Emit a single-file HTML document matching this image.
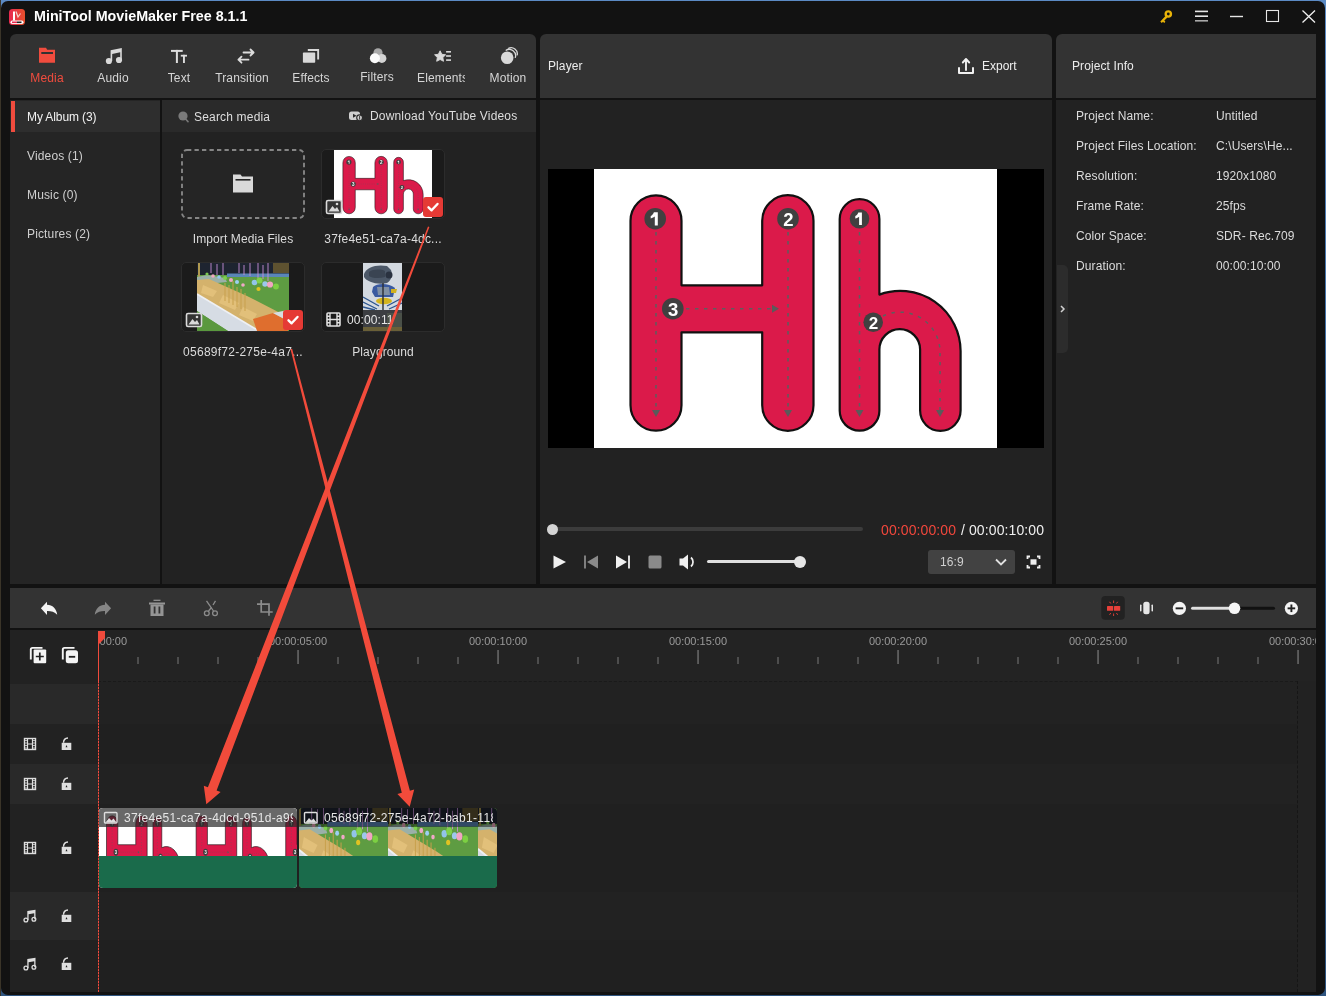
<!DOCTYPE html>
<html><head><meta charset="utf-8">
<style>
*{margin:0;padding:0;box-sizing:border-box}
html,body{width:1326px;height:996px;overflow:hidden}
body{background:linear-gradient(90deg,#3a3428 0,#3a3428 1px,transparent 1px),linear-gradient(#5b8ac4 0,#5b8ac4 40px,#2a5a8c 60%,#2f5580);font-family:"Liberation Sans",sans-serif;position:relative}
.a{position:absolute}
.t{will-change:transform;position:absolute;white-space:nowrap;font-size:12px;letter-spacing:0.15px;color:#e6e6e6;line-height:14px}
#win{position:absolute;left:1px;top:1px;width:1324px;height:994px;background:#121212;border-radius:7px;overflow:hidden}
</style></head><body>
<div id="win"></div>
<div id="root" style="position:absolute;left:0;top:0;width:1326px;height:996px;will-change:transform">

<svg width="0" height="0" style="position:absolute">
<defs>
 <g id="hh">
  <rect x="594" y="169" width="403" height="279" fill="#fff"/>
  <g fill="#db1a4a" stroke="#111" stroke-width="2.2" stroke-linejoin="round">
   <path d="M630.5 220.8 A25.5 25.5 0 0 1 681.5 220.8 L681.5 285.3 L762.2 285.3 L762.2 220.8 A25.65 25.65 0 0 1 813.5 220.8 L813.5 405.2 A25.65 25.65 0 0 1 762.2 405.2 L762.2 332.3 L681.5 332.3 L681.5 405.2 A25.5 25.5 0 0 1 630.5 405.2 Z"/>
   <path d="M839.7 219.05 A19.85 19.85 0 0 1 879.4 219.05 L879.4 294.6 A60.4 60.4 0 0 1 960.6 351 L960.6 410.6 A20.25 20.25 0 0 1 920.1 410.6 L920.1 349.5 A20.35 20.35 0 0 0 879.4 349.5 L879.4 410.85 A19.85 19.85 0 0 1 839.7 410.85 Z"/>
  </g>
  <g stroke="#5e5e5e" stroke-width="1.5" fill="none" stroke-dasharray="3.4 5.6">
   <path d="M656 232 V410"/><path d="M788 232 V410"/><path d="M686 308.7 H772"/>
   <path d="M859.5 232 V410"/><path d="M883 316 A40 40 0 0 1 940 350 V410"/>
  </g>
  <g fill="#5a5a5a">
   <path d="M652 410 L660 410 L656 417z"/><path d="M784 410 L792 410 L788 417z"/>
   <path d="M855.5 410 L863.5 410 L859.5 417z"/><path d="M936 410 L944 410 L940 417z"/>
   <path d="M772 304.7 L772 312.7 L779 308.7z"/>
  </g>
  <g fill="#404040">
   <circle cx="655.2" cy="218.7" r="10.8"/><circle cx="788" cy="218.7" r="10.8"/><circle cx="672.8" cy="308.7" r="10.8"/>
   <circle cx="859.5" cy="218.7" r="9.8"/><circle cx="873.2" cy="322.3" r="9.8"/>
  </g>
  <path d="M653.9 212.2 H657.8 V225.6 H654.8 V216.6 C653.9 217.4 652.4 218.1 650.7 218.6 V215.9 C652.1 215.4 653.3 214 653.9 212.2z" fill="#fff"/><path d="M858.3 212.6 H861.9 V225.1 H859.1 V216.8 C858.3 217.5 856.9 218.2 855.3 218.6 V216.1 C856.6 215.6 857.7 214.3 858.3 212.6z" fill="#fff"/>
  <g fill="#fff" font-family="Liberation Sans" font-weight="bold" font-size="18.5" text-anchor="middle">
   <text x="788.3" y="225.5">2</text><text x="673.2" y="315.5">3</text>
   <text x="873.5" y="328.5" font-size="17">2</text>
  </g>
 </g>
 <g id="food">
  <rect width="92" height="68" fill="#5e9c42"/>
  <rect width="92" height="12" fill="#1e2430"/>
  <rect x="76" y="0" width="16" height="10" fill="#5e5230"/>
  <rect x="30" y="10.5" width="62" height="3.5" fill="#5a86b8"/>
  <path d="M14 0 V10 M20 1 V12 M26 0 V12 M42 0 V10 M47 2 V12 M53 0 V13 M61 0 V15 M66 2 V16 M71 0 V18" stroke="#c890d8" stroke-width="0.9"/>
  <rect x="1" y="0" width="2" height="24" fill="#b09a50"/>
  <path d="M0 14 L10 12 L28 15 L30 19 L0 22z" fill="#9ab0a8"/>
  <path d="M0 17 L12 16 L50 33 L91 54 L91 68 L62 68 L0 33z" fill="#d4b26c"/>
  <path d="M0 31 L62 68 L31 68 L0 48z" fill="#d6dce4"/>
  <path d="M0 31 L62 68" stroke="#eef0f4" stroke-width="1.6"/>
  <path d="M6 22 L20 28 L16 34 L4 30z M26 32 L42 40 L38 47 L22 40z M46 44 L60 51 L56 58 L42 52z" fill="#e2c07a"/>
  <path d="M28 20 V38 M32 22 V40 M36 18 V42 M40 24 V44 M44 26 V46 M48 30 V48" stroke="#c8a04c" stroke-width="1"/>
  <path d="M56 56 L76 50 L91 58 L91 68 L60 68z" fill="#df6e2e"/>
  <path d="M76 50 L91 47 L91 58z" fill="#d8dce2"/>
  <path d="M0 48 L0 68 L31 68z" fill="#5a983e"/>
  <g><circle cx="57.5" cy="19.5" r="2.8" fill="#92c4ea"/><circle cx="62.5" cy="17.5" r="3" fill="#80d04c"/><circle cx="68" cy="21" r="2.7" fill="#9cc8ec"/><circle cx="73" cy="21.5" r="3.1" fill="#f2a4c2"/><circle cx="79" cy="23.5" r="2.9" fill="#7cd042"/><circle cx="61.5" cy="26" r="2.1" fill="#e0c222"/>
  <circle cx="10" cy="11" r="1.6" fill="#7cc850"/><circle cx="16" cy="13" r="1.8" fill="#f0a8c0"/><circle cx="22" cy="14" r="1.8" fill="#90c8f0"/><circle cx="28" cy="15" r="2" fill="#7cd050"/><circle cx="34" cy="17" r="2" fill="#f0a8c8"/><circle cx="40" cy="19" r="2" fill="#9cd0f0"/><circle cx="46" cy="22" r="1.8" fill="#f0a8c8"/></g>
 </g>
 <g id="play">
  <rect width="39" height="68" fill="#d3d9e0"/>
  <path d="M1 11 C3 4 14 1 24 3 L28 7 C30 12 28 18 24 20 C14 22 4 19 1 14z" fill="#4c5868"/>
  <path d="M6 9 C10 6 18 6 22 8 L22 14 C16 16 8 15 6 13z" fill="#3a4452"/>
  <circle cx="26" cy="12" r="3.5" fill="#2a3240"/>
  <path d="M10 24 C14 20 26 20 32 25 L30 34 L12 34 L9 29z" fill="#3a5aa0"/>
  <path d="M14 24 L26 24 L27 32 L15 32z" fill="#8090a4"/>
  <path d="M28 26 L34 26 L33 30 L28 30z" fill="#d0b020"/>
  <ellipse cx="21" cy="38" rx="8" ry="3.2" fill="#d4b41e"/>
  <path d="M20 20 V47" stroke="#2a2e36" stroke-width="1.4"/>
  <path d="M0 34 L16 43 M39 35 L24 43 M0 39 L14 46 M39 40 L26 46 M0 44 L12 47" stroke="#2c5590" stroke-width="1.3"/>
  <rect y="47" width="39" height="21" fill="#3c3e42"/>
  <rect x="24" y="50" width="15" height="14" fill="#4a5048"/>
  <rect y="64" width="39" height="4" fill="#6a6038"/>
 </g>
</defs>
</svg>


<!-- title bar -->
<div class="t" style="left:34px;top:8px;font-size:14.3px;font-weight:bold;color:#fff;line-height:16px;letter-spacing:0">MiniTool MovieMaker Free 8.1.1</div>


<!-- logo -->
<svg class="a" style="left:8px;top:8px" width="18" height="18" viewBox="0 0 18 18">
 <defs><linearGradient id="lg" x1="0" y1="0" x2="1" y2="0"><stop offset="0" stop-color="#e8294f"/><stop offset="1" stop-color="#e8502c"/></linearGradient></defs>
 <rect x="1" y="1" width="16" height="16" rx="3.5" fill="url(#lg)"/>
 <rect x="5" y="3.5" width="2" height="9" fill="#fff"/>
 <path d="M8 3.5 L10 9 L12.5 5.5" stroke="#f4d0c8" stroke-width="1.2" fill="none"/>
 <rect x="2.5" y="12.5" width="13" height="3.5" rx="1.7" fill="#fff"/>
 <rect x="4" y="13.5" width="5" height="1.6" fill="#e8294f"/><rect x="9" y="13.5" width="4.5" height="1.6" fill="#222"/>
</svg>
<!-- window controls -->
<svg class="a" style="left:1150px;top:0" width="176" height="34" viewBox="1150 0 176 34">
 <g fill="#e9b308">
  <circle cx="1168.3" cy="14" r="3.8"/>
  <path d="M1165.5 16 L1160.3 21.5 L1161.8 23 L1163 21.8 L1164.2 23 L1165.4 21.8 L1164.3 20.6 L1167.5 17.5z"/>
 </g>
 <circle cx="1168.3" cy="14" r="1.4" fill="#121212"/>
 <rect x="1195" y="10.6" width="13" height="1.6" fill="#e6e6e6"/>
 <rect x="1195" y="15.4" width="13" height="1.6" fill="#e6e6e6"/>
 <rect x="1195" y="20" width="13" height="1.6" fill="#a8a8a8"/>
 <rect x="1230" y="15.8" width="13" height="1.4" fill="#e6e6e6"/>
 <rect x="1266.5" y="10.5" width="12" height="11" fill="none" stroke="#e6e6e6" stroke-width="1.1"/>
 <path d="M1302.5 10.5 L1315 22.5 M1315 10.5 L1302.5 22.5" stroke="#f0f0f0" stroke-width="1.3"/>
</svg>

<!-- media panel -->
<div class="a" style="left:10px;top:34px;width:526px;height:64px;background:#323232;border-radius:6px 6px 0 0"></div>
<div class="a" style="left:10px;top:100px;width:150px;height:484px;background:#252525"></div>
<div class="a" style="left:11px;top:101px;width:149px;height:31px;background:#2e2e2e"></div>
<div class="a" style="left:11px;top:101px;width:4px;height:31px;background:#f04c3e"></div>
<div class="a" style="left:162px;top:100px;width:374px;height:484px;background:#222"></div>
<div class="a" style="left:162px;top:100px;width:374px;height:32px;background:#2a2a2a"></div>


<!-- toolbar icons -->
<svg class="a" style="left:0;top:0" width="540" height="100" viewBox="0 0 540 100">
 <!-- media folder -->
 <path d="M39 47.8h7l1.2 2H55v13H39z" fill="#f04c3e"/>
 <rect x="41.3" y="52" width="11.7" height="2" fill="#323232"/>
 <!-- audio note -->
 <g fill="#d9d9d9" stroke="none">
  <circle cx="108.9" cy="61" r="3.1"/><circle cx="119" cy="60" r="3.1"/>
  <path d="M110.6 50.2 L121.8 48 L121.8 60 L120.2 60 L120.2 52.3 L112.2 53.9 L112.2 61 L110.6 61z"/>
 </g>
 <!-- text Tt -->
 <g fill="#dcdcdc">
  <rect x="171" y="49.9" width="11.7" height="2"/><rect x="175.9" y="49.9" width="2" height="13.1"/>
  <rect x="180.8" y="54.8" width="6.2" height="1.8"/><rect x="183" y="54.8" width="1.9" height="8.2"/>
 </g>
 <!-- transition arrows -->
 <g stroke="#dcdcdc" stroke-width="1.8" fill="none" stroke-linecap="round" stroke-linejoin="round">
  <path d="M243.5 52.5H253.5M250.5 49.5L253.6 52.5L250.5 55.5"/>
  <path d="M248.5 59.7H238.5M241.5 56.7L238.4 59.7L241.5 62.7"/>
 </g>
 <!-- effects -->
 <g fill="#d9d9d9">
  <rect x="302.9" y="52.6" width="12.3" height="10.1" rx="0.8"/>
  <path d="M307.8 48.9H319.1V59.5H317.2V50.9H307.8z"/>
 </g>
 <!-- filters -->
 <circle cx="378" cy="52.8" r="4.6" fill="#a8a8a8"/>
 <circle cx="381.9" cy="58.4" r="4.5" fill="#d4d4d4"/>
 <circle cx="374.9" cy="58.3" r="5" fill="#fafafa"/>
 <!-- elements -->
 <path d="M440.10 50.80 L441.80 54.25 L445.62 54.81 L442.86 57.50 L443.51 61.29 L440.10 59.50 L436.69 61.29 L437.34 57.50 L434.58 54.81 L438.40 54.25z" fill="#d9d9d9" stroke="#d9d9d9" stroke-width="0.9" stroke-linejoin="round"/>
 <g fill="#d9d9d9"><rect x="446.1" y="51" width="4.9" height="1.6"/><rect x="446.1" y="55.2" width="4.9" height="1.6"/><rect x="446.1" y="59.3" width="4.9" height="1.6"/></g>
 <!-- motion -->
 <g fill="none" stroke="#d9d9d9" stroke-width="1.3"><path d="M505.69 50.54 A6.3 6.3 0 0 1 515.22 57.85"/><path d="M508.15 48.52 A6.1 6.1 0 0 1 517.09 55.38"/></g>
 <circle cx="507.2" cy="57.8" r="6.3" fill="#d9d9d9"/>
</svg>
<div class="t" style="left:27px;top:71px;width:40px;text-align:center;color:#f04c3e">Media</div>
<div class="t" style="left:93px;top:71px;width:40px;text-align:center;color:#d6d6d6">Audio</div>
<div class="t" style="left:159px;top:71px;width:40px;text-align:center;color:#d6d6d6">Text</div>
<div class="t" style="left:212px;top:71px;width:60px;text-align:center;color:#d6d6d6">Transition</div>
<div class="t" style="left:291px;top:71px;width:40px;text-align:center;color:#d6d6d6">Effects</div>
<div class="t" style="left:357px;top:70px;width:40px;text-align:center;color:#d6d6d6">Filters</div>
<div class="a" style="left:417px;top:71px;width:48px;height:16px;overflow:hidden"><div class="t" style="left:0;top:0;color:#d6d6d6">Elements</div></div>
<div class="t" style="left:488px;top:71px;width:40px;text-align:center;color:#d6d6d6">Motion</div>

<!-- sidebar -->
<div class="t" style="left:27px;top:110px;color:#f2f2f2;letter-spacing:-0.1px">My Album (3)</div>
<div class="t" style="left:27px;top:149px;color:#cfcfcf">Videos (1)</div>
<div class="t" style="left:27px;top:188px;color:#cfcfcf">Music (0)</div>
<div class="t" style="left:27px;top:227px;color:#cfcfcf">Pictures (2)</div>


<!-- search row -->
<svg class="a" style="left:176px;top:109px" width="16" height="16" viewBox="0 0 16 16">
 <circle cx="7" cy="7" r="4.6" fill="#7a7a7a"/><path d="M10 10.5 L12 12.6" stroke="#7a7a7a" stroke-width="1.6" stroke-linecap="round"/>
</svg>
<div class="t" style="left:194px;top:110px;color:#dedede;letter-spacing:0.18px">Search media</div>
<svg class="a" style="left:346px;top:108px" width="20" height="16" viewBox="0 0 20 16">
 <rect x="3" y="3.5" width="11" height="8.5" rx="2.5" fill="#cfcfcf"/>
 <path d="M7 5.8 L10.5 7.8 L7 9.8z" fill="#2a2a2a"/>
 <circle cx="13.6" cy="9.8" r="2.9" fill="#cfcfcf" stroke="#2a2a2a" stroke-width="1.1"/>
 <path d="M13.6 8 V11.6" stroke="#2a2a2a" stroke-width="0.9" fill="none"/>
</svg>
<div class="t" style="left:370px;top:109px;color:#dedede;letter-spacing:0.17px">Download YouTube Videos</div>

<!-- import box -->
<svg class="a" style="left:180px;top:148px" width="126" height="72" viewBox="0 0 126 72"><rect x="2" y="2" width="122" height="68" rx="5" fill="#252525" stroke="#858585" stroke-width="1.9" stroke-dasharray="4.3 3.2"/></svg>
<svg class="a" style="left:232px;top:173px" width="22" height="20" viewBox="0 0 22 20">
 <path d="M1 1.5 H8.5 L10 3.5 H21 V19.5 H1z" fill="#d9d9d9"/>
 <rect x="3.5" y="6" width="15" height="1.6" fill="#252525"/>
</svg>
<div class="t" style="left:181px;top:232px;width:124px;text-align:center;color:#dcdcdc;letter-spacing:0.1px">Import Media Files</div>

<!-- Hh card -->
<div class="a" style="left:321px;top:149px;width:124px;height:70px;background:#1b1b1b;border:1px solid #2c2c2c;border-radius:5px"></div>
<svg class="a" style="left:334px;top:150px" width="98" height="68" viewBox="594 169 403 279" preserveAspectRatio="none">
 <use href="#hh"/>
</svg>
<svg class="a" style="left:325px;top:199px" width="18" height="16" viewBox="0 0 18 16">
 <rect x="1.5" y="1.5" width="15" height="13" rx="1.5" fill="#333" stroke="#d9d9d9" stroke-width="1.6"/>
 <path d="M3.5 12.5 L7.5 7 L10 10 L12 8 L14.5 12.5z" fill="#d9d9d9"/><circle cx="12" cy="5" r="1.3" fill="#d9d9d9"/>
</svg>
<div class="a" style="left:423px;top:197px;width:20px;height:20px;background:#e53a35;border-radius:3px"></div>
<svg class="a" style="left:423px;top:197px" width="20" height="20" viewBox="0 0 20 20"><path d="M5.5 10.3 L8.6 13.3 L14.5 7" stroke="#fff" stroke-width="2.4" fill="none" stroke-linecap="round" stroke-linejoin="round"/></svg>
<div class="t" style="left:321px;top:232px;width:124px;text-align:center;color:#dcdcdc;letter-spacing:0.2px">37fe4e51-ca7a-4dc...</div>

<!-- food card -->
<div class="a" style="left:181px;top:262px;width:124px;height:70px;background:#1b1b1b;border:1px solid #2c2c2c;border-radius:5px"></div>
<svg class="a" style="left:197px;top:263px" width="92" height="68" viewBox="0 0 92 68">
 <use href="#food"/>
</svg>
<svg class="a" style="left:185px;top:312px" width="18" height="16" viewBox="0 0 18 16">
 <rect x="1.5" y="1.5" width="15" height="13" rx="1.5" fill="#333" stroke="#d9d9d9" stroke-width="1.6"/>
 <path d="M3.5 12.5 L7.5 7 L10 10 L12 8 L14.5 12.5z" fill="#d9d9d9"/><circle cx="12" cy="5" r="1.3" fill="#d9d9d9"/>
</svg>
<div class="a" style="left:283px;top:310px;width:20px;height:20px;background:#e53a35;border-radius:3px"></div>
<svg class="a" style="left:283px;top:310px" width="20" height="20" viewBox="0 0 20 20"><path d="M5.5 10.3 L8.6 13.3 L14.5 7" stroke="#fff" stroke-width="2.4" fill="none" stroke-linecap="round" stroke-linejoin="round"/></svg>
<div class="t" style="left:181px;top:345px;width:124px;text-align:center;color:#dcdcdc;letter-spacing:0.25px">05689f72-275e-4a7...</div>

<!-- playground card -->
<div class="a" style="left:321px;top:262px;width:124px;height:70px;background:#1b1b1b;border:1px solid #2c2c2c;border-radius:5px"></div>
<svg class="a" style="left:363px;top:263px" width="39" height="68" viewBox="0 0 39 68">
 <use href="#play"/>
</svg>
<svg class="a" style="left:325px;top:311px" width="17" height="17" viewBox="0 0 17 17">
 <rect x="2" y="2" width="13" height="13" rx="1" fill="none" stroke="#e0e0e0" stroke-width="1.6"/>
 <path d="M5 2V15M12 2V15M5 8.5H12M2 5.3H5M2 8.5H5M2 11.7H5M12 5.3H15M12 8.5H15M12 11.7H15" stroke="#e0e0e0" stroke-width="1.4"/>
</svg>
<div class="t" style="left:347px;top:313px;color:#e6e6e6;letter-spacing:0.1px">00:00:11</div>
<div class="t" style="left:321px;top:345px;width:124px;text-align:center;color:#dcdcdc;letter-spacing:0.1px">Playground</div>

<!-- player panel -->
<div class="a" style="left:540px;top:34px;width:512px;height:64px;background:#333;border-radius:6px 6px 0 0"></div>
<div class="a" style="left:540px;top:100px;width:512px;height:484px;background:#222"></div>

<!-- project info -->
<div class="a" style="left:1056px;top:34px;width:260px;height:64px;background:#333;border-radius:6px 0 0 0"></div>
<div class="a" style="left:1056px;top:100px;width:260px;height:484px;background:#222"></div>


<div class="t" style="left:548px;top:59px;color:#ececec;letter-spacing:0.1px">Player</div>
<svg class="a" style="left:956px;top:56px" width="20" height="20" viewBox="956 56 20 20">
 <path d="M959 68 V73 H973 V68" stroke="#f0f0f0" stroke-width="2" fill="none" stroke-linejoin="round" stroke-linecap="round"/>
 <path d="M966 70 V59.5 M962.8 62.5 L966 59 L969.2 62.5" stroke="#f0f0f0" stroke-width="1.9" fill="none" stroke-linecap="round" stroke-linejoin="round"/>
</svg>
<div class="t" style="left:982px;top:59px;color:#f0f0f0;letter-spacing:0">Export</div>
<!-- video -->
<div class="a" style="left:548px;top:169px;width:496px;height:279px;background:#000"></div>
<svg class="a" style="left:594px;top:169px" width="403" height="279" viewBox="594 169 403 279"><use href="#hh"/></svg>
<!-- progress -->
<div class="a" style="left:553px;top:527px;width:310px;height:4px;background:#3c3c3c;border-radius:2px"></div>
<div class="a" style="left:547px;top:524px;width:11px;height:11px;background:#d4d4d4;border-radius:50%"></div>
<div class="t" style="left:881px;top:522px;font-size:14px;line-height:16px;color:#f2473c;letter-spacing:0.1px">00:00:00:00</div>
<div class="t" style="left:961px;top:522px;font-size:14px;line-height:16px;color:#f0f0f0;letter-spacing:0.1px">/ 00:00:10:00</div>
<!-- controls -->
<svg class="a" style="left:540px;top:545px" width="512" height="34" viewBox="540 545 512 34">
 <path d="M553.5 555.5 L566 562 L553.5 568.5z" fill="#f0f0f0"/>
 <path d="M585 555.5 V568.5" stroke="#8a8a8a" stroke-width="1.8"/><path d="M598 555.5 V568.5 L587 562z" fill="#8a8a8a"/>
 <path d="M616 555.5 L627 562 L616 568.5z" fill="#f0f0f0"/><path d="M629 555.5 V568.5" stroke="#f0f0f0" stroke-width="1.8"/>
 <rect x="648.5" y="555.5" width="13" height="13" rx="1.5" fill="#8a8a8a"/>
 <path d="M679.5 558.5 H683 L688 554.5 V569.5 L683 565.5 H679.5z" fill="#f0f0f0"/>
 <path d="M691 557.5 A6 6 0 0 1 691 566.5" stroke="#f0f0f0" stroke-width="1.7" fill="none"/>
 <path d="M1027.5 559 V556.5 H1030 M1037 556.5 H1039.5 V559 M1039.5 565 V567.5 H1037 M1030 567.5 H1027.5 V565" stroke="#f0f0f0" stroke-width="1.8" fill="none"/>
 <rect x="1030.5" y="559.3" width="6" height="5.4" fill="#f0f0f0"/>
</svg>
<div class="a" style="left:707px;top:560px;width:95px;height:3px;background:#e0e0e0;border-radius:2px"></div>
<div class="a" style="left:794px;top:556px;width:12px;height:12px;background:#e6e6e6;border-radius:50%"></div>
<div class="a" style="left:928px;top:550px;width:87px;height:24px;background:#424242;border-radius:3px"></div>
<div class="t" style="left:940px;top:555px;color:#d0d0d0;letter-spacing:0.1px">16:9</div>
<svg class="a" style="left:993px;top:555px" width="16" height="14" viewBox="0 0 16 14"><path d="M3 4.5 L8 9.5 L13 4.5" stroke="#e0e0e0" stroke-width="1.8" fill="none"/></svg>

<!-- project info -->
<div class="t" style="left:1072px;top:59px;color:#ececec;letter-spacing:0.1px">Project Info</div>
<div class="t" style="left:1076px;top:109px;color:#dcdcdc;letter-spacing:0.12px">Project Name:</div>
<div class="t" style="left:1076px;top:139px;color:#dcdcdc;letter-spacing:0.12px">Project Files Location:</div>
<div class="t" style="left:1076px;top:169px;color:#dcdcdc;letter-spacing:0.12px">Resolution:</div>
<div class="t" style="left:1076px;top:199px;color:#dcdcdc;letter-spacing:0.12px">Frame Rate:</div>
<div class="t" style="left:1076px;top:229px;color:#dcdcdc;letter-spacing:0.12px">Color Space:</div>
<div class="t" style="left:1076px;top:259px;color:#dcdcdc;letter-spacing:0.12px">Duration:</div>
<div class="t" style="left:1216px;top:109px;color:#dcdcdc;letter-spacing:0.1px">Untitled</div>
<div class="t" style="left:1216px;top:139px;color:#dcdcdc;letter-spacing:0.1px">C:\Users\He...</div>
<div class="t" style="left:1216px;top:169px;color:#dcdcdc;letter-spacing:0.1px">1920x1080</div>
<div class="t" style="left:1216px;top:199px;color:#dcdcdc;letter-spacing:0.1px">25fps</div>
<div class="t" style="left:1216px;top:229px;color:#dcdcdc;letter-spacing:0.1px">SDR- Rec.709</div>
<div class="t" style="left:1216px;top:259px;color:#dcdcdc;letter-spacing:0.1px">00:00:10:00</div>
<div class="a" style="left:1057px;top:265px;width:11px;height:88px;background:#2c2c2c;border-radius:0 5px 5px 0"></div>
<svg class="a" style="left:1057px;top:302px" width="11" height="14" viewBox="0 0 11 14"><path d="M4 4 L7 7 L4 10" stroke="#d0d0d0" stroke-width="1.5" fill="none"/></svg>

<!-- timeline -->
<div class="a" style="left:10px;top:588px;width:1306px;height:40px;background:#333"></div>
<div class="a" style="left:10px;top:630px;width:1306px;height:362px;background:#222"></div>

<!-- timeline toolbar -->
<svg class="a" style="left:10px;top:588px" width="1306" height="40" viewBox="10 588 1306 40">
 <path d="M40.9 608.2 L47 601.8 L47 604.7 C52.5 604.9 56.6 608.5 57.2 614.8 C54.5 611.8 51 610.9 47 611 L47 615 Z" fill="#f4f4f4"/>
 <path d="M111.1 608.2 L105 601.8 L105 604.7 C99.5 604.9 95.4 608.5 94.8 614.8 C97.5 611.8 101 610.9 105 611 L105 615 Z" fill="#858585"/>
 <g fill="#959595"><rect x="153.5" y="599.7" width="7" height="1.2"/><rect x="149" y="602.5" width="16" height="2"/><path d="M150.5 604.5 H163.5 V616 H150.5z M153.7 606.5 V613.5 H155.5 V606.5z M158.5 606.5 V613.5 H160.3 V606.5z" fill-rule="evenodd"/></g>
 <g stroke="#8c8c8c" stroke-width="1.3" fill="none"><path d="M206.5 600.8 L213.5 611"/><path d="M215.5 600.8 L213 605 M211.5 607.5 L208.5 611"/><circle cx="206.8" cy="613.3" r="2.4"/><circle cx="215" cy="613.3" r="2.4"/></g>
 <g stroke="#8c8c8c" stroke-width="1.7" fill="none"><path d="M261.2 600 V612 H272.7"/><path d="M257 604.2 H269 V615.8"/></g>
 <rect x="1101.3" y="596" width="23.5" height="23.7" rx="4" fill="#222"/>
 <g fill="#e8403a"><rect x="1107" y="606" width="6.2" height="4.8" rx="0.6"/><rect x="1114" y="606" width="6.2" height="4.8" rx="0.6"/></g>
 <g stroke="#e8403a" stroke-width="0.9"><path d="M1113.6 600.5 V603 M1113.6 613.5 V616 M1109.5 601.8 L1110.8 603.5 M1117.7 601.8 L1116.4 603.5 M1109.5 614.8 L1110.8 613 M1117.7 614.8 L1116.4 613"/></g>
 <g fill="#e6e6e6"><rect x="1143.3" y="601.8" width="6.3" height="12.4" rx="2.5"/><rect x="1140" y="604.5" width="1.5" height="7" rx="0.7"/><rect x="1151.5" y="604.5" width="1.5" height="7" rx="0.7"/></g>
 <circle cx="1179.4" cy="608.3" r="6.6" fill="#f4f4f4"/><rect x="1175.6" y="607.4" width="7.6" height="1.9" fill="#222"/>
 <rect x="1191" y="606.8" width="84" height="3" rx="1.5" fill="#111"/>
 <rect x="1191" y="606.8" width="44" height="3" rx="1.5" fill="#e0e0e0"/>
 <circle cx="1234.5" cy="608.3" r="5.8" fill="#f6f6f6"/>
 <circle cx="1291.4" cy="608.3" r="6.6" fill="#f4f4f4"/><rect x="1287.6" y="607.4" width="7.6" height="1.9" fill="#222"/><rect x="1290.45" y="604.5" width="1.9" height="7.6" fill="#222"/>
</svg>

<!-- track header column rows -->
<div class="a" style="left:10px;top:630px;width:88px;height:54px;background:#222"></div>
<div class="a" style="left:10px;top:684px;width:88px;height:40px;background:#292929"></div>
<div class="a" style="left:10px;top:724px;width:88px;height:40px;background:#222"></div>
<div class="a" style="left:10px;top:764px;width:88px;height:40px;background:#292929"></div>
<div class="a" style="left:10px;top:804px;width:88px;height:88px;background:#222"></div>
<div class="a" style="left:10px;top:892px;width:88px;height:48px;background:#292929"></div>
<div class="a" style="left:10px;top:940px;width:88px;height:52px;background:#222"></div>
<!-- track area rows -->
<div class="a" style="left:98px;top:630px;width:1218px;height:51px;background:#232323"></div>
<div class="a" style="left:98px;top:681px;width:1200px;height:43px;background:#222"></div>
<div class="a" style="left:98px;top:724px;width:1200px;height:40px;background:#202020"></div>
<div class="a" style="left:98px;top:764px;width:1200px;height:40px;background:#222"></div>
<div class="a" style="left:98px;top:804px;width:1200px;height:88px;background:#202020"></div>
<div class="a" style="left:98px;top:892px;width:1200px;height:48px;background:#222"></div>
<div class="a" style="left:98px;top:940px;width:1200px;height:52px;background:#202020"></div>
<div class="a" style="left:98px;top:681px;width:1200px;height:0;border-top:1px dashed #1a1a1a"></div>
<div class="a" style="left:1297px;top:681px;width:0;height:311px;border-left:1px dashed #161616"></div>
<div class="a" style="left:1298px;top:681px;width:18px;height:311px;background:#222"></div>

<svg class="a" style="left:98px;top:630px" width="1218" height="51" viewBox="98 630 1218 51">
<rect x="97.4" y="650" width="1.3" height="14" fill="#777"/>
<rect x="137.4" y="657" width="1.2" height="7" fill="#6a6a6a"/>
<rect x="177.4" y="657" width="1.2" height="7" fill="#6a6a6a"/>
<rect x="217.4" y="657" width="1.2" height="7" fill="#6a6a6a"/>
<rect x="257.4" y="657" width="1.2" height="7" fill="#6a6a6a"/>
<rect x="297.4" y="650" width="1.3" height="14" fill="#777"/>
<rect x="337.4" y="657" width="1.2" height="7" fill="#6a6a6a"/>
<rect x="377.4" y="657" width="1.2" height="7" fill="#6a6a6a"/>
<rect x="417.4" y="657" width="1.2" height="7" fill="#6a6a6a"/>
<rect x="457.4" y="657" width="1.2" height="7" fill="#6a6a6a"/>
<rect x="497.4" y="650" width="1.3" height="14" fill="#777"/>
<rect x="537.4" y="657" width="1.2" height="7" fill="#6a6a6a"/>
<rect x="577.4" y="657" width="1.2" height="7" fill="#6a6a6a"/>
<rect x="617.4" y="657" width="1.2" height="7" fill="#6a6a6a"/>
<rect x="657.4" y="657" width="1.2" height="7" fill="#6a6a6a"/>
<rect x="697.4" y="650" width="1.3" height="14" fill="#777"/>
<rect x="737.4" y="657" width="1.2" height="7" fill="#6a6a6a"/>
<rect x="777.4" y="657" width="1.2" height="7" fill="#6a6a6a"/>
<rect x="817.4" y="657" width="1.2" height="7" fill="#6a6a6a"/>
<rect x="857.4" y="657" width="1.2" height="7" fill="#6a6a6a"/>
<rect x="897.4" y="650" width="1.3" height="14" fill="#777"/>
<rect x="937.4" y="657" width="1.2" height="7" fill="#6a6a6a"/>
<rect x="977.4" y="657" width="1.2" height="7" fill="#6a6a6a"/>
<rect x="1017.4" y="657" width="1.2" height="7" fill="#6a6a6a"/>
<rect x="1057.4" y="657" width="1.2" height="7" fill="#6a6a6a"/>
<rect x="1097.4" y="650" width="1.3" height="14" fill="#777"/>
<rect x="1137.4" y="657" width="1.2" height="7" fill="#6a6a6a"/>
<rect x="1177.4" y="657" width="1.2" height="7" fill="#6a6a6a"/>
<rect x="1217.4" y="657" width="1.2" height="7" fill="#6a6a6a"/>
<rect x="1257.4" y="657" width="1.2" height="7" fill="#6a6a6a"/>
<rect x="1297.4" y="650" width="1.3" height="14" fill="#777"/>
</svg>
<div class="a" style="left:98px;top:630px;width:60px;height:20px;overflow:hidden"><div class="t" style="left:-40px;top:4px;width:80px;text-align:center;color:#9a9a9a;font-size:11px;letter-spacing:0">00:00:00:00</div></div>
<div class="t" style="left:258px;top:634px;width:80px;text-align:center;color:#9a9a9a;letter-spacing:0.05px;font-size:11px;letter-spacing:0">00:00:05:00</div>
<div class="t" style="left:458px;top:634px;width:80px;text-align:center;color:#9a9a9a;letter-spacing:0.05px;font-size:11px;letter-spacing:0">00:00:10:00</div>
<div class="t" style="left:658px;top:634px;width:80px;text-align:center;color:#9a9a9a;letter-spacing:0.05px;font-size:11px;letter-spacing:0">00:00:15:00</div>
<div class="t" style="left:858px;top:634px;width:80px;text-align:center;color:#9a9a9a;letter-spacing:0.05px;font-size:11px;letter-spacing:0">00:00:20:00</div>
<div class="t" style="left:1058px;top:634px;width:80px;text-align:center;color:#9a9a9a;letter-spacing:0.05px;font-size:11px;letter-spacing:0">00:00:25:00</div>
<div class="a" style="left:1258px;top:630px;width:58px;height:20px;overflow:hidden"><div class="t" style="left:0;top:4px;width:80px;text-align:center;color:#9a9a9a;font-size:11px;letter-spacing:0">00:00:30:00</div></div>

<!-- track header icons -->
<svg class="a" style="left:10px;top:630px" width="88" height="361" viewBox="10 630 88 361">
 <g fill="none" stroke="#f4f4f4" stroke-width="1.9"><path d="M30.8 659.5 V649.5 Q30.8 647.9 32.5 647.9 H42.5"/><path d="M62.8 659.5 V649.5 Q62.8 647.9 64.5 647.9 H74.5"/></g>
 <rect x="33.6" y="649.6" width="12.6" height="13.6" rx="1" fill="#f4f4f4" stroke="#222" stroke-width="0"/>
 <path d="M35.8 656.5 H43.8 M39.8 652.5 V660.5" stroke="#222" stroke-width="1.7"/>
 <rect x="65.8" y="650.3" width="12.2" height="12.9" rx="2.5" fill="#f4f4f4"/>
 <rect x="68.8" y="655.9" width="6.4" height="1.8" fill="#222"/>
 <g id="film"><rect x="24.5" y="738.5" width="11" height="11" fill="none" stroke="#dedede" stroke-width="1.4"/><path d="M27.5 738.5 V749.5 M32.5 738.5 V749.5 M27.5 744 H32.5" stroke="#dedede" stroke-width="1.2"/><path d="M24.5 740.5 H27.5 M24.5 743 H27.5 M24.5 745.5 H27.5 M24.5 748 H27.5 M32.5 740.5 H35.5 M32.5 743 H35.5 M32.5 745.5 H35.5 M32.5 748 H35.5" stroke="#dedede" stroke-width="0.8"/></g>
 <use href="#film" y="40"/><use href="#film" y="104"/>
 <g id="lock"><rect x="61.7" y="742.8" width="9.6" height="7.2" fill="#dedede"/><path d="M63.5 742.8 C63.5 739.5 65 738.2 68 738" stroke="#dedede" stroke-width="1.4" fill="none"/><path d="M66.5 745 L67.5 747.3 L65.5 747.3z" fill="#222"/></g>
 <use href="#lock" y="40"/><use href="#lock" y="104"/><use href="#lock" y="172"/><use href="#lock" y="220"/>
 <g id="note" fill="#dedede"><circle cx="25.9" cy="920" r="1.9" fill="none" stroke="#dedede" stroke-width="1.3"/><circle cx="33.9" cy="919.3" r="1.9" fill="none" stroke="#dedede" stroke-width="1.3"/><path d="M27.3 920 V911 L35.5 909.7 V919.3 H34.2 V913.3 L28.6 914.2 V920z"/></g>
 <use href="#note" y="48"/>
</svg>


<!-- clips -->
<div class="a" style="left:99px;top:808px;width:198px;height:80px;border-radius:4px;overflow:hidden;background:#fff">
 <svg class="a" style="left:0;top:0" width="198" height="48" viewBox="0 0 198 48">
  <svg x="-0.6" y="-0.6" width="89.5" height="89.5" viewBox="594 169 403 279" preserveAspectRatio="none"><use href="#hh"/></svg>
  <svg x="89" y="-0.6" width="89.5" height="89.5" viewBox="594 169 403 279" preserveAspectRatio="none"><use href="#hh"/></svg>
  <svg x="178.6" y="-0.6" width="89.5" height="89.5" viewBox="594 169 403 279" preserveAspectRatio="none"><use href="#hh"/></svg>
 </svg>
 <div class="a" style="left:0;top:0;width:198px;height:18.5px;background:rgba(40,40,40,0.7)"></div>
 <div class="a" style="left:0;top:48px;width:198px;height:32px;background:#1a6b4b"></div>
</div>
<div class="a" style="left:299px;top:808px;width:198px;height:80px;border-radius:4px;overflow:hidden;background:#5c9840">
 <svg class="a" style="left:0;top:0" width="198" height="48" viewBox="0 0 198 48">
  <svg x="-1" y="0" width="90" height="90" viewBox="0 0 92 68" preserveAspectRatio="none"><use href="#food"/></svg>
  <svg x="89" y="0" width="90" height="90" viewBox="0 0 92 68" preserveAspectRatio="none"><use href="#food"/></svg>
  <svg x="179" y="0" width="90" height="90" viewBox="0 0 92 68" preserveAspectRatio="none"><use href="#food"/></svg>
 </svg>
 <div class="a" style="left:0;top:0;width:198px;height:18.5px;background:rgba(0,0,0,0.45)"></div>
 <div class="a" style="left:0;top:48px;width:198px;height:32px;background:#1a6b4b"></div>
</div>
<svg class="a" style="left:103px;top:811px" width="16" height="14" viewBox="0 0 16 14">
 <rect x="1.5" y="1.5" width="12.5" height="10.5" rx="1" fill="none" stroke="#dedede" stroke-width="1.4"/>
 <path d="M2.5 11.5 L6 7 L8.5 9.5 L10.5 7.5 L13.5 11.5z" fill="#dedede"/>
</svg>
<div class="a" style="left:124px;top:808px;width:169px;height:18px;overflow:hidden"><div class="t" style="left:0;top:3px;color:#e6e6e6;letter-spacing:0.3px">37fe4e51-ca7a-4dcd-951d-a99</div></div>
<svg class="a" style="left:303px;top:811px" width="16" height="14" viewBox="0 0 16 14">
 <rect x="1.5" y="1.5" width="12.5" height="10.5" rx="1" fill="none" stroke="#dedede" stroke-width="1.4"/>
 <path d="M2.5 11.5 L6 7 L8.5 9.5 L10.5 7.5 L13.5 11.5z" fill="#dedede"/>
</svg>
<div class="a" style="left:324px;top:808px;width:169px;height:18px;overflow:hidden"><div class="t" style="left:0;top:3px;color:#e6e6e6;letter-spacing:0.3px">05689f72-275e-4a72-bab1-118</div></div>

<!-- playhead -->
<div class="a" style="left:98px;top:632px;width:1.2px;height:49px;background:#f04a3c"></div>
<div class="a" style="left:98px;top:681px;width:1px;height:311px;background:repeating-linear-gradient(#f04a3c 0 2px, rgba(240,74,60,0.35) 2px 3px)"></div>
<svg class="a" style="left:98px;top:631px" width="8" height="14" viewBox="0 0 8 14"><path d="M0 0 H7 V7 L1 13 H0z" fill="#f04a3c"/></svg>



<!-- arrows -->
<svg class="a" style="left:0;top:0" width="1326" height="996" viewBox="0 0 1326 996">
 <path d="M428.0 226.4 L207.9 787.2 L203.8 785.7 L206.3 804.3 L220.6 792.1 L216.6 790.6 L429.4 227.0Z" fill="#f24b3b"/>
 <path d="M290.5 349.2 L401.8 792.8 L397.4 794.0 L409.7 806.8 L414.2 789.6 L409.9 790.7 L292.1 348.8Z" fill="#f24b3b"/>
</svg>

</div>
</body></html>
